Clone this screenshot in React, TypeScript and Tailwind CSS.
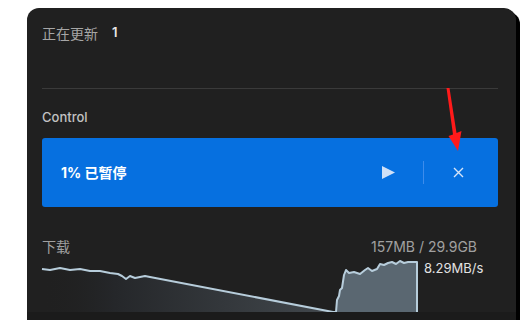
import React from "react";

const font = { fontFamily: 'Inter, "Noto Sans CJK SC", "Noto Sans", sans-serif' };

const linePts: [number, number][] = [
  [42, 269], [50, 270], [60, 268], [70, 270], [80, 269], [90, 271], [100, 271], [110, 273],
  [118, 274], [122, 276], [126, 279], [130, 276], [135, 278], [140, 277], [145, 276], [150, 277],
  [333, 312],
];
const rightPts: [number, number][] = [
  [333, 312], [336, 312], [337, 300], [339, 296], [340, 290], [342, 288], [344, 275], [346, 270],
  [349, 273], [354, 272], [360, 274], [365, 270], [368, 268], [372, 271], [377, 269], [380, 264],
  [384, 265], [388, 263], [392, 262], [396, 264], [400, 261], [404, 263], [408, 262], [412, 262],
  [417, 262], [417, 312],
];
const rel = (p: [number, number][]) => p.map(([x, y]) => `${x - 42},${y - 260}`).join(" ");

export default function App() {
  return (
    <div className="relative w-[526px] h-[320px] overflow-hidden bg-white" style={font}>
      <div className="ml-[27px] mt-[8px] w-[489px] h-[330px] bg-[#202020] rounded-t-[12px] shadow-[4px_4px_0_#000] flex flex-col">
        <div className="pl-[15px] pr-[18px] pt-[15px] flex flex-col">
          <div className="h-[20px] flex items-center text-[14px] text-[#a6a6a6]">
            <span>正在更新</span>
            <span className="ml-[14px] text-[#e8e8e8] font-semibold text-[13px]">1</span>
          </div>
          <div className="mt-[45px] h-px bg-[#3a3a3a]" />
          <div className="mt-[19px] h-[20px] flex items-center text-[13px] font-medium text-[#c2c2c2]">
            Control
          </div>
          <div className="mt-[10px] h-[69px] rounded-[3px] bg-[#0670e0] flex items-center pl-[19px]">
            <span className="text-[14px] font-bold text-white">1% 已暂停</span>
            <div className="ml-auto flex items-center h-full">
              <svg width="14" height="13" viewBox="0 0 14 13" className="mr-[27px]">
                <polygon points="0,0 13,6.5 0,13" fill="#cfe0f7" />
              </svg>
              <div className="w-px h-[23px] bg-[#3d8ceb]" />
              <svg width="11" height="11" viewBox="0 0 11 11" className="ml-[29px] mr-[34px]">
                <path d="M1 1L10 10M10 1L1 10" stroke="#d5e4f8" strokeWidth="1.4" />
              </svg>
            </div>
          </div>
          <div className="mt-[29px] h-[20px] flex items-center justify-between text-[14px] text-[#a0a0a0]">
            <span>下载</span>
            <span className="mr-[21px]">157MB / 29.9GB</span>
          </div>
          <div className="mt-[4px] flex items-start h-[52px]">
            <svg width="378" height="52" viewBox="0 0 378 52" className="overflow-visible">
              <defs>
                <linearGradient id="lg" x1="0" x2="1" y1="0" y2="0">
                  <stop offset="0" stopColor="#202020" stopOpacity="0" />
                  <stop offset="0.25" stopColor="#25272a" />
                  <stop offset="1" stopColor="#42484d" />
                </linearGradient>
              </defs>
              <polygon points={`${rel(linePts)} 0,52`} fill="url(#lg)" />
              <polygon points={rel(rightPts)} fill="#5a6771" />
              <polyline points={rel(linePts)} fill="none" stroke="#b7cddb" strokeWidth="2" strokeLinejoin="round" />
              <polyline points={rel(rightPts)} fill="none" stroke="#b7cddb" strokeWidth="2" strokeLinejoin="round" />
            </svg>
            <span className="ml-[4px] text-[13px] leading-[16px] text-[#e2e2e2]">8.29MB/s</span>
          </div>
        </div>
        <div className="h-[20px] bg-[#1b1b1b]" />
      </div>
      <svg className="absolute left-0 top-0 pointer-events-none" width="526" height="320">
        <polygon points="446.5,88 449.5,88 456.5,133 461.5,131 458,151 448.5,136 453,134.5" fill="#ff1a1a" />
      </svg>
    </div>
  );
}
